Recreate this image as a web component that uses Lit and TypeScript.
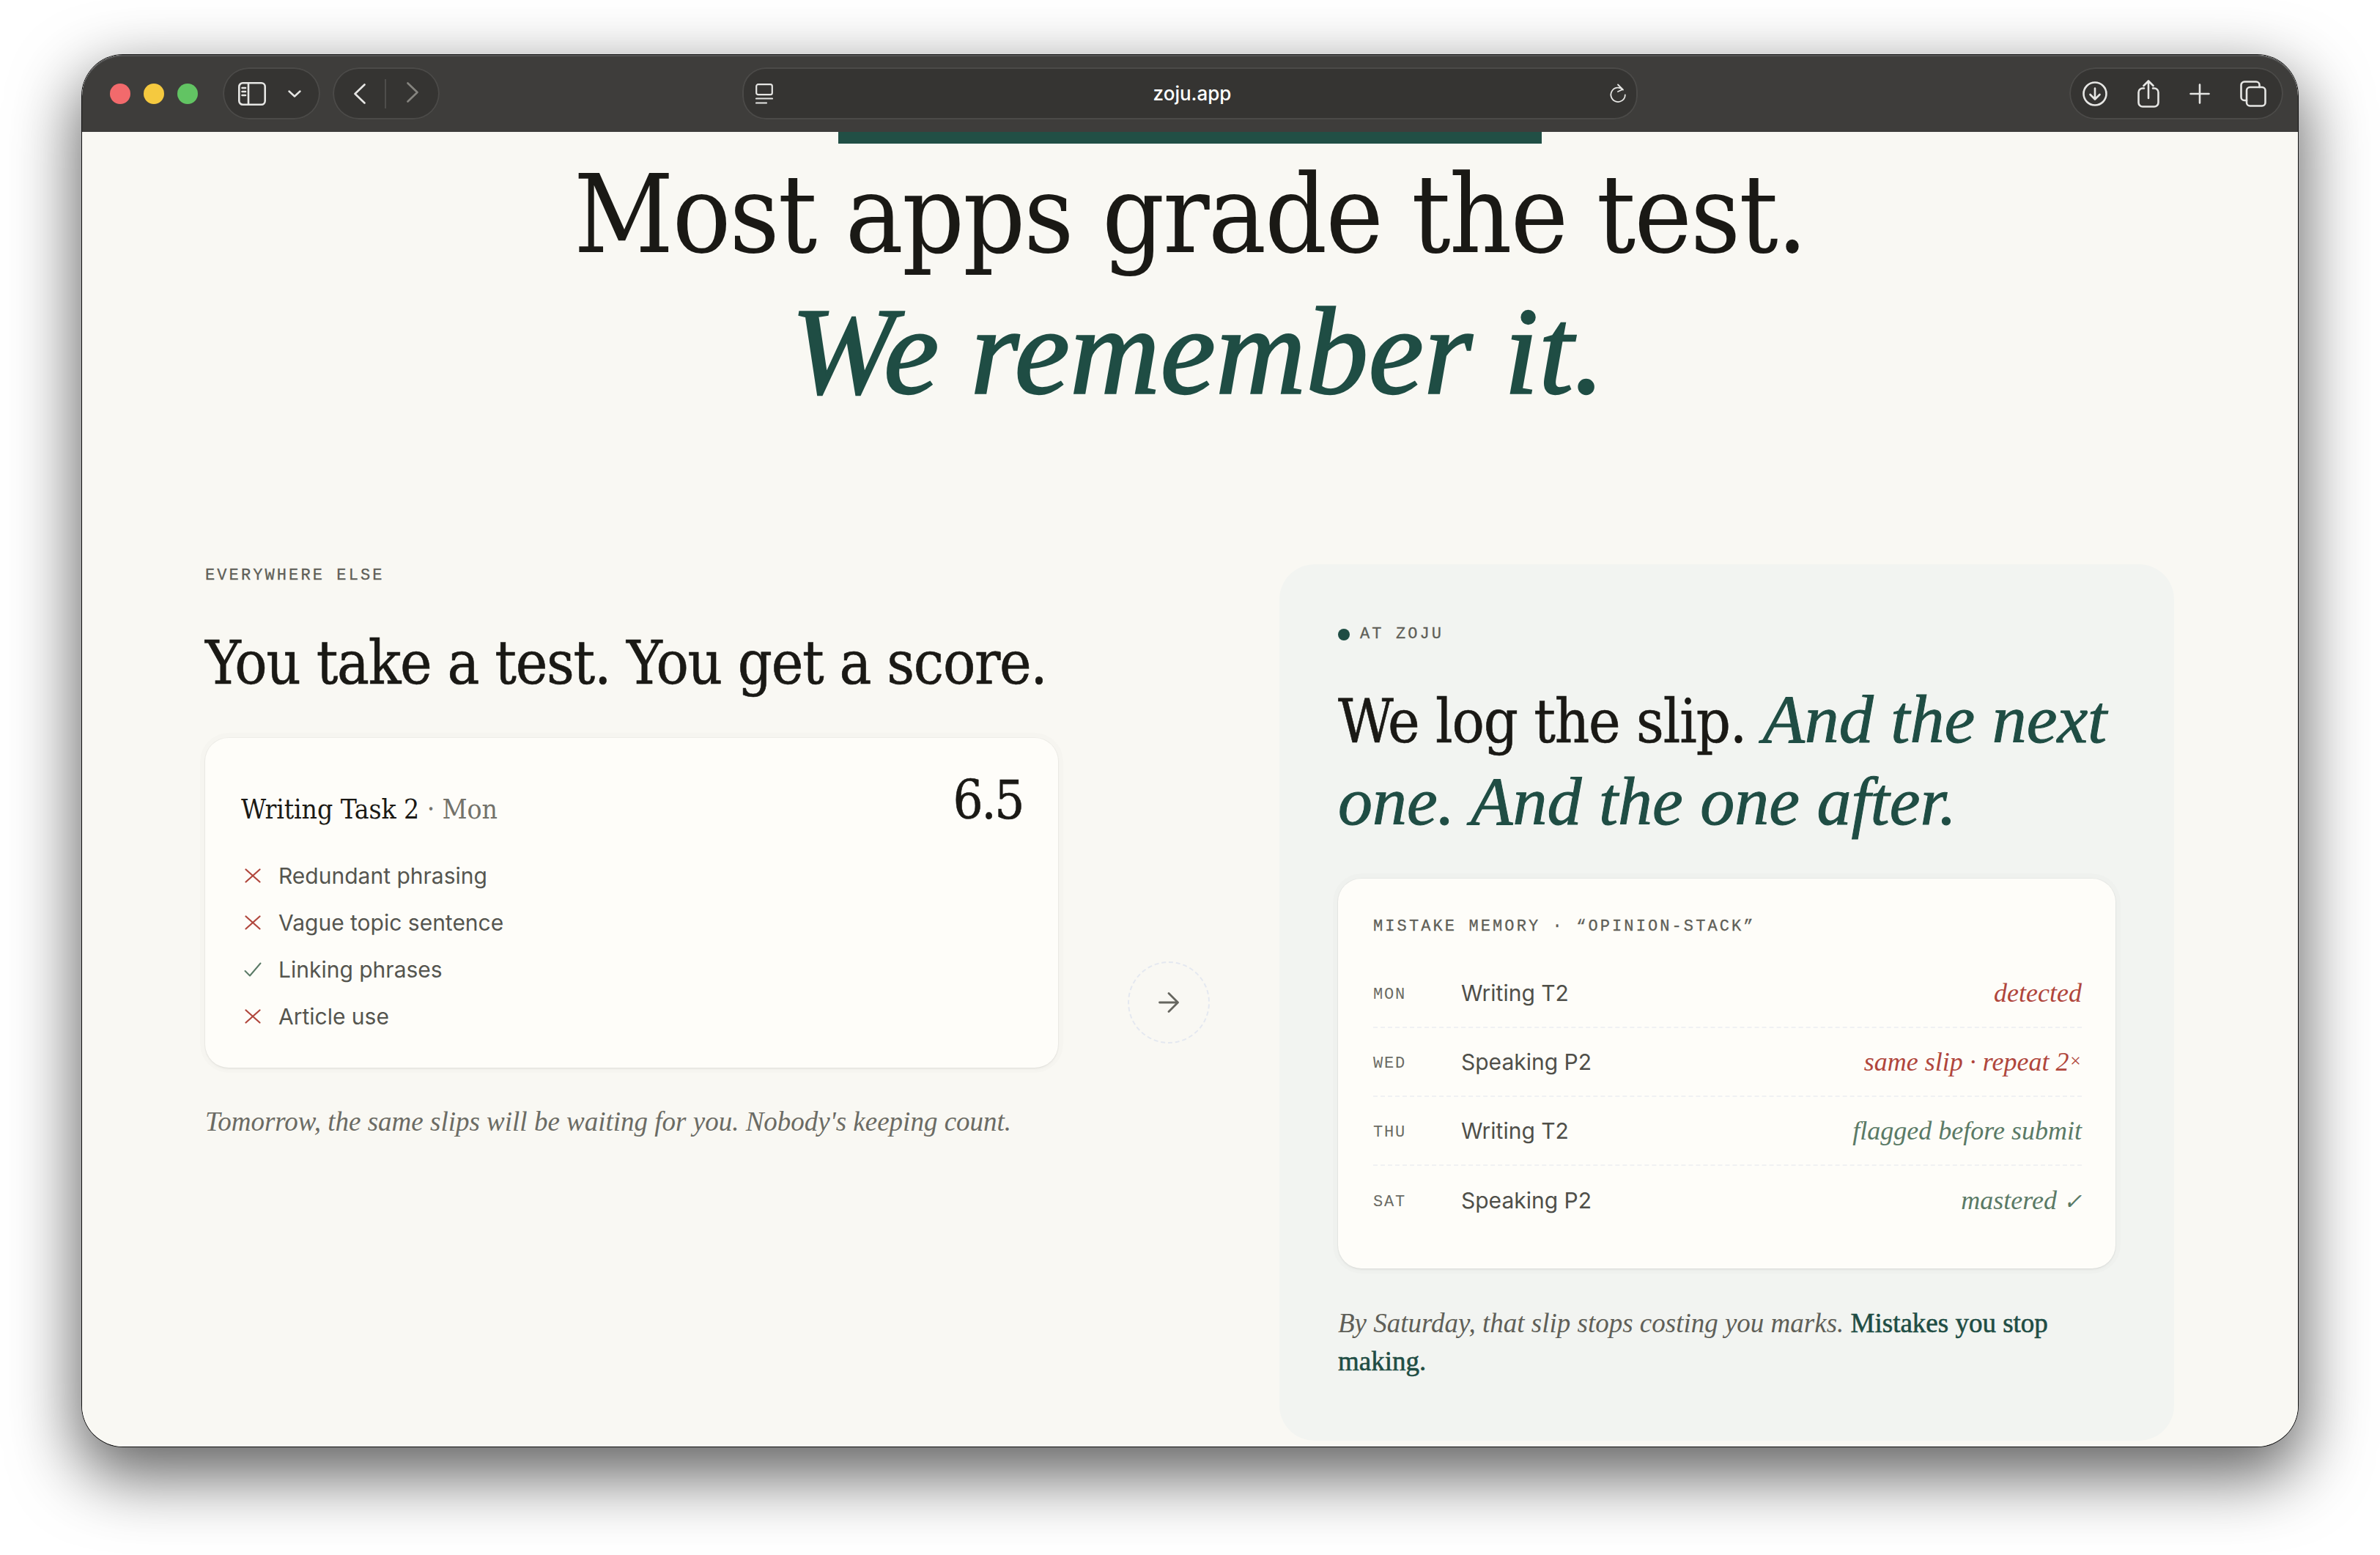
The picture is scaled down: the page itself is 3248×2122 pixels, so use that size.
import { LitElement, html, css, svg } from "lit";
import { customElement } from "lit/decorators.js";

const ic = (w: number, h: number, body: unknown, sw = 2.6) => html`<svg width=${w} height=${h} viewBox="0 0 ${w} ${h}" fill="none" stroke="currentColor" stroke-width=${sw} stroke-linecap="round" stroke-linejoin="round">${body}</svg>`;

const rows = [
  ["MON", "Writing T2", html`detected`, "bad"],
  ["WED", "Speaking P2", html`same slip · repeat 2<span class="times">×</span>`, "bad"],
  ["THU", "Writing T2", html`flagged before submit`, "good"],
  ["SAT", "Speaking P2", html`mastered <span class="tick">✓</span>`, "good"],
];
const checks: [string, boolean][] = [
  ["Redundant phrasing", false],
  ["Vague topic sentence", false],
  ["Linking phrases", true],
  ["Article use", false],
];

@customElement("app-root")
export class AppRoot extends LitElement {
  static styles = css`
    :host { display: block; width: 3248px; height: 2122px; background: #fff; padding: 75px 112px 148px; box-sizing: border-box; overflow: hidden; }
    .win { height: 1899px; border-radius: 56px; background: #f9f8f3; overflow: hidden; display: flex; flex-direction: column; }
    .shadow { border-radius: 56px; box-shadow: 0 0 0 1px #111, 0 34px 90px 6px rgba(0,0,0,.62); }
    .bar { height: 105px; flex: none; background: #3e3d3b; box-shadow: inset 0 2px 0 #555; border-radius: 56px 56px 0 0; display: flex; align-items: center; padding: 0 20px 0 38px; box-sizing: border-box; color: #e6e6e4; position: relative; }
    .lights { display: flex; gap: 18px; margin-right: 34px; }
    .dot { width: 28px; height: 28px; border-radius: 50%; }
    .r { background: #f26a6c; } .y { background: #f5c93f; } .g { background: #62c463; }
    .pill { height: 71px; border-radius: 36px; background: #353432; box-shadow: inset 0 0 0 2px #4b4a48; display: flex; align-items: center; box-sizing: border-box; flex: none; }
    .p1 { width: 133px; padding-left: 21px; gap: 30px; margin-right: 17px; }
    .p2 { width: 146px; padding-left: 29px; margin-right: 413px; }
    .sep { width: 2px; height: 40px; background: #4e4d4b; margin: 0 28px 0 26px; }
    .dim { color: #85847f; }
    .url { width: 1222px; padding: 0 16px 0 18px; justify-content: space-between; border-radius: 32px; margin-right: 589px; }
    .url span { font: 500 26px Inter, sans-serif; color: #fff; padding-left: 4px; }
    .p3 { width: 292px; padding-left: 18px; gap: 41px; justify-content: flex-start; }
    .p3 svg { flex: none; }
    .strip { flex: none; width: 960px; height: 16px; background: #214f45; align-self: center; }
    .main { flex: 1; min-height: 0; display: flex; flex-direction: column; padding: 0 168px; }
    h1, h2, h3, .head { font-family: "DejaVu Serif", serif; font-stretch: condensed; }
    .note, .res, .foot, em { font-family: "Liberation Serif", serif; font-stretch: normal; font-style: italic; }
    h1 { margin: 0; padding-top: 2px; text-align: center; font-size: 148px; line-height: 190px; font-weight: 400; color: #1a1915; letter-spacing: -2px; }
    em { color: #1f4d44; line-height: 0; }
    h1 em { margin-left: 22px; font-size: 170px; letter-spacing: .3px; vertical-align: -2px; -webkit-text-stroke: 2.4px #1f4d44; }
    .cols { display: grid; grid-template-columns: 1164px 112px 1221px; column-gap: 95px; margin-top: 192px; height: 1196px; }
    .label { font: 400 22px/28px "Liberation Mono", monospace; letter-spacing: 3.1px; color: #5f5f58; -webkit-text-stroke: .3px #5f5f58; }
    .left { padding-top: 2px; }
    h2 { margin: 50px 0 0; font-size: 82px; line-height: 110px; font-weight: 400; color: #1a1915; letter-spacing: -1.300px; white-space: nowrap; -webkit-text-stroke: .6px #1a1915; }
    .card { background: #fefdf9; border-radius: 32px; box-shadow: 0 0 0 1px rgba(0,0,0,.03), 0 0 0 7px rgba(0,0,0,.012), 0 2px 3px rgba(0,0,0,.05); }
    .score { margin-top: 47px; height: 450px; box-sizing: border-box; padding: 45px 48px 0 49px; }
    .head { display: flex; justify-content: space-between; align-items: baseline; font-size: 37px; line-height: 80px; letter-spacing: -.1px; color: #1a1915; }
    .head i { font-style: normal; color: #73726b; }
    .head b { font-size: 72px; line-height: 80px; font-weight: 400; letter-spacing: -2.500px; -webkit-text-stroke: .6px #1a1915; }
    ul { list-style: none; margin: 18px 0 0; padding: 0; display: flex; flex-direction: column; }
    li { height: 64px; display: flex; align-items: center; gap: 23px; font: 400 30px Inter, sans-serif; color: #55554f; }
    li span { width: 24px; margin-left: 4px; display: flex; justify-content: center; }
    .x { color: #b0463c; } .v { color: #5a7a66; }
    .note { margin: 49px 0 0; font-size: 37px; line-height: 50px; color: #6b6b64; white-space: nowrap; }
    .arrow { align-self: center; width: 112px; height: 112px; border-radius: 50%; border: 2px dashed #e4e8f0; box-sizing: border-box; display: flex; align-items: center; justify-content: center; color: #66665f; }
    .panel { background: #f2f4f1; border-radius: 48px; padding: 82px 78px 0 80px; box-sizing: border-box; }
    .at { display: flex; align-items: center; gap: 14px; height: 28px; }
    .at::before { content: ""; width: 16px; height: 16px; border-radius: 50%; background: #1f4d44; }
    h3 { margin: 49px 0 0; font-size: 82px; line-height: 112px; font-weight: 400; color: #1a1915; letter-spacing: -1.100px; -webkit-text-stroke: .6px #1a1915; }
    h3 em { font-size: 94px; letter-spacing: 0; -webkit-text-stroke: 1px #1f4d44; }
    .mem { margin-top: 46px; width: 1061px; height: 532px; padding: 52px 46px 0 48px; box-sizing: border-box; }
    .rows { margin-top: 30px; }
    .row { height: 94px; display: flex; align-items: center; border-bottom: 2px dashed #f0f1f3; box-sizing: border-box; }
    .row:last-child { border-bottom: 0; }
    .day { width: 120px; padding-top: 4px; font: 400 22px "Liberation Mono", monospace; letter-spacing: 1.800px; color: #6b6b64; }
    .task { flex: 1; font: 400 30px Inter, sans-serif; color: #4f4f49; }
    .res { font-size: 36px; }
    .times { font-size: 26px; vertical-align: 5px; }
    .tick { font-size: 30px; }
    .bad { color: #b0463c; } .good { color: #5a7a66; }
    .foot { margin: 49px 0 0; font-size: 37px; line-height: 52px; color: #5f5f58; }
    .foot b { font-style: normal; font-weight: 400; color: #1f4d44; -webkit-text-stroke: .6px #1f4d44; }
  `;

  render() {
    return html`<div class="shadow"><div class="win">
      <div class="bar">
        <div class="lights"><div class="dot r"></div><div class="dot y"></div><div class="dot g"></div></div>
        <div class="pill p1">
          ${ic(38, 32, svg`<rect x="1.3" y="1.3" width="35.4" height="29.4" rx="5"/><path d="M14 1.5V30.5"/><path d="M5.5 8h4.5M5.5 13h4.5M5.5 18h4.5"/>`)}
          ${ic(18, 10, svg`<path d="M1.5 1.5L9 8.5L16.500 1.5"/>`, 2.4)}
        </div>
        <div class="pill p2">
          ${ic(16, 28, svg`<path d="M14.500 1.500L1.500 14L14.500 26.500"/>`)}
          <div class="sep"></div>
          <span class="dim">${ic(16, 28, svg`<path d="M1.500 1.500L14.500 14L1.500 26.500"/>`)}</span>
        </div>
        <div class="pill url">
          ${ic(24, 28, svg`<rect x="1.2" y="1.2" width="21.600" height="14" rx="2.500"/><path d="M1 20.500H23M1 26.500H15"/>`, 2.2)}
          <span>zoju.app</span>
          ${ic(24, 28, svg`<path d="M20 8.500A9.700 9.700 0 1 0 22.800 15.500M13 1.500L19.500 8L13 11"/>`, 1.8)}
        </div>
        <div class="pill p3">
          ${ic(34, 34, svg`<circle cx="17" cy="17" r="15.500"/><path d="M17 9.500V24M10.500 18L17 24.500L23.500 18"/>`)}
          ${ic(30, 38, svg`<path d="M9 11.500H7A5.500 5.500 0 0 0 1.500 17V31A5.500 5.500 0 0 0 7 36.500H23A5.500 5.500 0 0 0 28.500 31V17A5.500 5.500 0 0 0 23 11.500H21M15 25V2M8.500 8L15 1.500L21.500 8"/>`)}
          ${ic(28, 28, svg`<path d="M14 1.500V26.500M1.500 14H26.500"/>`)}
          ${ic(36, 36, svg`<path d="M9 27H6A4.500 4.500 0 0 1 1.500 22.500V6A4.500 4.500 0 0 1 6 1.500H22A4.500 4.500 0 0 1 26.500 6V9"/><rect x="9" y="9" width="25.500" height="25.500" rx="4.500"/>`)}
        </div>
      </div>
      <div class="strip"></div>
      <div class="main">
        <h1>Most apps grade the test.<br><em>We remember it.</em></h1>
        <div class="cols">
          <div class="left">
            <div class="label">EVERYWHERE ELSE</div>
            <h2>You take a test. You get a score.</h2>
            <div class="card score">
              <div class="head"><span>Writing Task 2 <i>· Mon</i></span><b>6.5</b></div>
              <ul>${checks.map(([t, ok]) => html`<li>
                <span class=${ok ? "v" : "x"}>${ok
                  ? ic(24, 20, svg`<path d="M1.500 12L8 18.500L22.500 1.500"/>`, 2)
                  : ic(22, 20, svg`<path d="M1.500 1.500L20.500 18.500M20.500 1.500L1.500 18.500"/>`, 2.2)}</span>${t}</li>`)}</ul>
            </div>
            <p class="note">Tomorrow, the same slips will be waiting for you. Nobody's keeping count.</p>
          </div>
          <div class="arrow">${ic(28, 28, svg`<path d="M1.500 14H26M14 1.500L26.500 14L14 26.500"/>`, 2.800)}</div>
          <div class="panel">
            <div class="at label">AT ZOJU</div>
            <h3>We log the slip. <em>And the next one. And the one after.</em></h3>
            <div class="card mem">
              <div class="label">MISTAKE MEMORY · “OPINION-STACK”</div>
              <div class="rows">${rows.map(([d, t, r, c]) => html`<div class="row"><span class="day">${d}</span><span class="task">${t}</span><span class="res ${c}">${r}</span></div>`)}</div>
            </div>
            <p class="foot">By Saturday, that slip stops costing you marks. <b>Mistakes you stop making.</b></p>
          </div>
        </div>
      </div>
    </div></div>`;
  }
}
